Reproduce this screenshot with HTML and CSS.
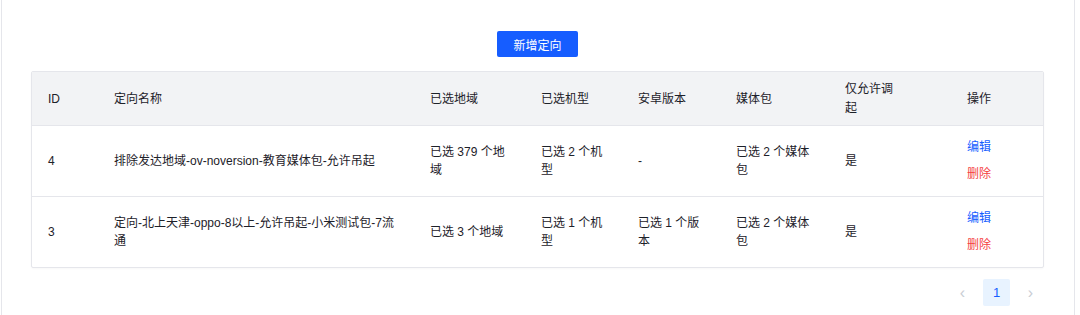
FILE: index.html
```html
<!DOCTYPE html>
<html>

<head>
    <meta charset="utf-8">
    <meta name="viewport" content="width=device-width,initial-scale=1.0">
    <title>定向管理</title>
    <link rel="stylesheet" href="styles.css">
</head>

<body>
    <div class="card">
        <div class="toolbar">
            <button class="primary-button">新增定向</button>
        </div>
        <div class="table-wrap">
            <table class="target-table">
                <colgroup>
                    <col style="width: 66px">
                    <col style="width: 316px">
                    <col style="width: 111px">
                    <col style="width: 97px">
                    <col style="width: 98px">
                    <col style="width: 109px">
                    <col style="width: 86px">
                    <col style="width: 128px">
                </colgroup>
                <thead>
                    <tr>
                        <th>ID</th>
                        <th>定向名称</th>
                        <th>已选地域</th>
                        <th>已选机型</th>
                        <th>安卓版本</th>
                        <th>媒体包</th>
                        <th>仅允许调起</th>
                        <th class="center">操作</th>
                    </tr>
                </thead>
                <tbody>
                    <tr>
                        <td>4</td>
                        <td>排除发达地域-ov-noversion-教育媒体包-允许吊起</td>
                        <td>已选 379 个地域</td>
                        <td>已选 2 个机型</td>
                        <td>-</td>
                        <td>已选 2 个媒体包</td>
                        <td>是</td>
                        <td class="center">
                            <a class="link">编辑</a>
                            <a class="link danger">删除</a>
                        </td>
                    </tr>
                    <tr>
                        <td>3</td>
                        <td>定向-北上天津-oppo-8以上-允许吊起-小米测试包-7流通</td>
                        <td>已选 3 个地域</td>
                        <td>已选 1 个机型</td>
                        <td>已选 1 个版本</td>
                        <td>已选 2 个媒体包</td>
                        <td>是</td>
                        <td class="center">
                            <a class="link">编辑</a>
                            <a class="link danger">删除</a>
                        </td>
                    </tr>
                </tbody>
            </table>
        </div>
        <div class="pagination">
            <span class="page-item disabled">&lsaquo;</span>
            <span class="page-item active">1</span>
            <span class="page-item disabled">&rsaquo;</span>
        </div>
    </div>
</body>

</html>
```

FILE: styles.css
```css
html,
body {
    margin: 0;
    padding: 0;
    height: 100%;
    overflow: hidden;
    background: #fff;
}

body {
    font-family: "Liberation Sans", "Noto Sans CJK SC", sans-serif;
    font-size: 12px;
    color: #1d2129;
    padding-left: 1px;
}

.card {
    width: 1074px;
    height: 100%;
    box-sizing: border-box;
    border-left: 1px solid #e5e6eb;
    border-right: 1px solid #e5e6eb;
    padding: 31px 30px 0 29px;
}

.toolbar {
    display: flex;
    justify-content: center;
    margin-bottom: 14px;
}

.primary-button {
    width: 81px;
    height: 26px;
    padding: 0;
    border: none;
    border-radius: 2px;
    background: #165dff;
    color: #fff;
    font-family: inherit;
    font-size: 12px;
    cursor: pointer;
}

.table-wrap {
    border: 1px solid #e5e6eb;
    border-radius: 2px;
    overflow: hidden;
    box-shadow: 0 1px 2px rgba(0, 0, 0, 0.03);
}

.target-table {
    width: 100%;
    table-layout: fixed;
    border-collapse: separate;
    border-spacing: 0;
}

.target-table th {
    background: #f2f3f5;
    font-weight: normal;
    text-align: left;
    line-height: 19px;
    padding: 8px 16px 7px;
    border-bottom: 1px solid #e5e6eb;
}

.target-table td {
    line-height: 18px;
    padding: 12px 16px;
    border-bottom: 1px solid #e5e6eb;
    vertical-align: middle;
}

.target-table tbody tr:last-child td {
    border-bottom: none;
}

.target-table .center {
    text-align: center;
}

.link {
    display: block;
    line-height: 19px;
    color: #165dff;
    cursor: pointer;
}

.link + .link {
    margin-top: 8px;
}

.link.danger {
    color: #f53f3f;
}

.pagination {
    display: flex;
    justify-content: flex-end;
    gap: 7px;
    margin-top: 11px;
}

.page-item {
    width: 27px;
    height: 27px;
    line-height: 27px;
    text-align: center;
    border-radius: 2px;
    font-size: 13px;
}

.page-item.active {
    background: #e8f3ff;
    color: #165dff;
}

.page-item.disabled {
    color: #c9cdd4;
    font-size: 16px;
}
```
